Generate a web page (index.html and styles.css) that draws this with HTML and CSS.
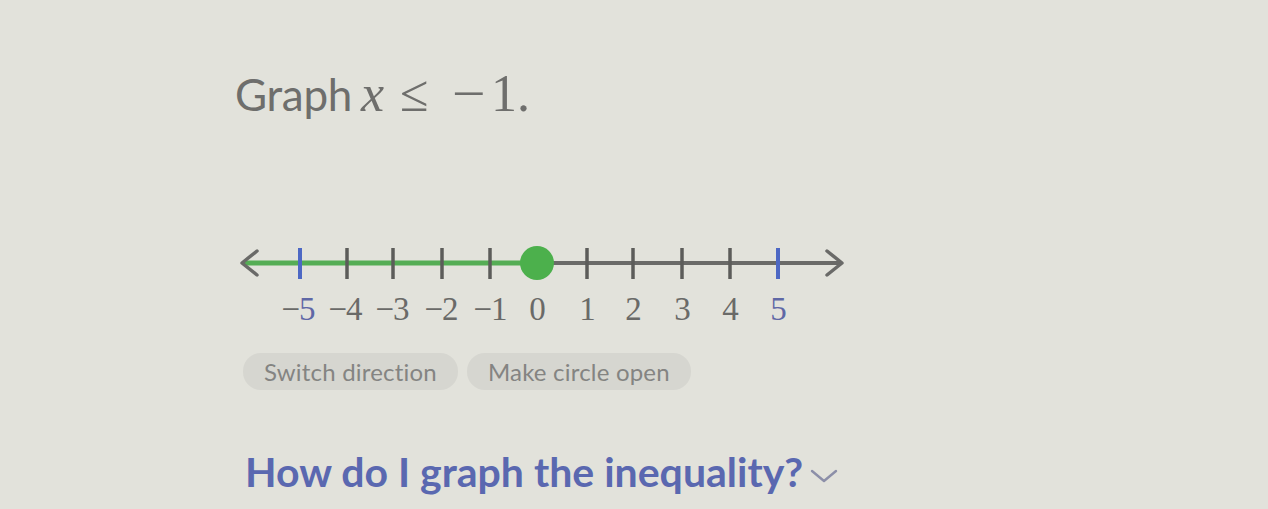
FILE: index.html
```html
<!DOCTYPE html>
<html>
<head>
<meta charset="utf-8">
<link rel="stylesheet" href="styles.css">
</head>
<body>
<main class="page">
  <h1 class="title">Graph <span class="math"><i class="var">x</i> <span class="op">≤</span> <span class="minus">−</span>1.</span></h1>
  <div class="numberline">
    <svg width="640" height="100" viewBox="0 0 640 100">
      <line x1="12" y1="33" x2="610" y2="33" stroke="#6a6a68" stroke-width="4"/>
      <line x1="14" y1="33" x2="307" y2="33" stroke="#55ad55" stroke-width="5"/>
      <polyline points="27,21 12,33 27,45" fill="none" stroke="#6a6a68" stroke-width="3.5" stroke-linecap="round" stroke-linejoin="round"/>
      <polyline points="597,21 612,33 597,45" fill="none" stroke="#6a6a68" stroke-width="3.5" stroke-linecap="round" stroke-linejoin="round"/>
      <g stroke="#5c5c5a" stroke-width="3.5">
        <line x1="117" y1="18" x2="117" y2="49"/>
        <line x1="163" y1="18" x2="163" y2="49"/>
        <line x1="212" y1="18" x2="212" y2="49"/>
        <line x1="260" y1="18" x2="260" y2="49"/>
        <line x1="357" y1="18" x2="357" y2="49"/>
        <line x1="403" y1="18" x2="403" y2="49"/>
        <line x1="452" y1="18" x2="452" y2="49"/>
        <line x1="500" y1="18" x2="500" y2="49"/>
      </g>
      <g stroke="#4d68c4" stroke-width="4">
        <line x1="70" y1="18" x2="70" y2="49"/>
        <line x1="548" y1="18" x2="548" y2="49"/>
      </g>
      <circle cx="307" cy="33" r="17" fill="#4cb04c"/>
      <g font-family="'Liberation Serif', 'DejaVu Serif', serif" font-size="33" fill="#6a6a68" text-anchor="middle" letter-spacing="-1">
        <text x="68" y="90">−<tspan fill="#5f68a6">5</tspan></text>
        <text x="115" y="90">−4</text>
        <text x="162" y="90">−3</text>
        <text x="211" y="90">−2</text>
        <text x="260" y="90">−1</text>
        <text x="307" y="90">0</text>
        <text x="357" y="90">1</text>
        <text x="403" y="90">2</text>
        <text x="452" y="90">3</text>
        <text x="500" y="90">4</text>
        <text x="548" y="90" fill="#5f68a6">5</text>
      </g>
    </svg>
  </div>
  <div class="buttons">
    <button class="pill">Switch direction</button>
    <button class="pill">Make circle open</button>
  </div>
  <a class="help" href="#">How do I graph the inequality? <svg class="chev" width="30" height="16" viewBox="0 0 30 16"><polyline points="3,3 15,13 27,3" fill="none" stroke="#8c8fa8" stroke-width="2.4" stroke-linecap="round" stroke-linejoin="round"/></svg></a>
</main>
</body>
</html>
```

FILE: styles.css
```css
html, body {
  margin: 0;
  padding: 0;
}
body {
  width: 1268px;
  height: 509px;
  overflow: hidden;
  background: #e2e2db;
  font-family: Lato, "Open Sans", sans-serif;
}
.page {
  display: flex;
  flex-direction: column;
  align-items: flex-start;
  padding: 67px 0 0 235px;
}
.title {
  margin: 0;
  font-size: 44px;
  font-weight: 400;
  line-height: 54px;
  height: 54px;
  color: #6e6e6c;
  letter-spacing: -0.3px;
  word-spacing: -2px;
}
.math {
  font-family: "Liberation Serif", "DejaVu Serif", serif;
  font-size: 52px;
  letter-spacing: 0;
  word-spacing: 0;
}
.var {
  font-style: italic;
}
.op {
  margin: 0 11px 0 3px;
}
.minus {
  display: inline-block;
  transform: scaleX(1.15);
  margin: 0 8px 0 1px;
}
.numberline {
  margin: 109px 0 0 -5px;
  height: 100px;
}
.numberline svg {
  display: block;
}
.buttons {
  display: flex;
  gap: 9px;
  margin: 23px 0 0 8px;
}
.pill {
  height: 37px;
  padding: 0 21px;
  border: none;
  border-radius: 18px;
  background: #d6d6d0;
  color: #848482;
  font-family: Lato, "Open Sans", sans-serif;
  font-size: 24px;
  letter-spacing: 0.2px;
  line-height: 37px;
}
.help {
  margin: 58px 0 0 10px;
  font-size: 41px;
  font-weight: 700;
  color: #5a68b0;
  text-decoration: none;
  display: flex;
  align-items: center;
  gap: 6px;
  line-height: 48px;
}
.chev {
  margin-top: 8px;
}
```
